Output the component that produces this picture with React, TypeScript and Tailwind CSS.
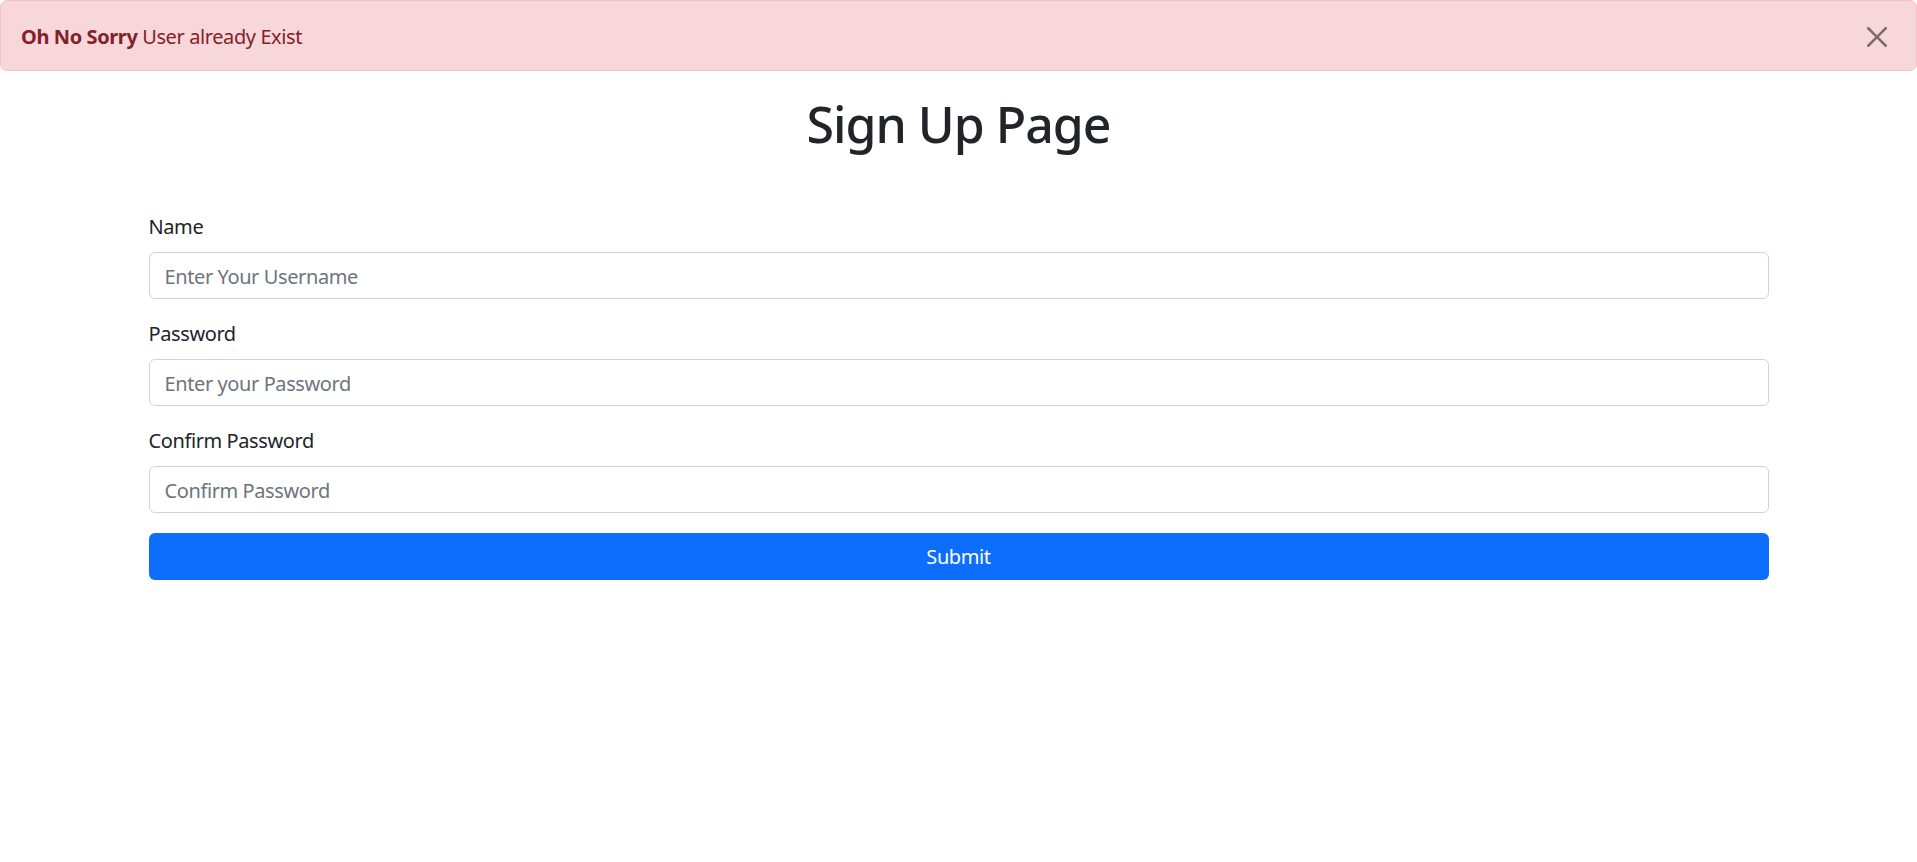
import React from "react";

export default function App() {
  return (
    <div className="min-h-[862px] w-full bg-white text-[#212529] font-['Noto_Sans','Open_Sans',sans-serif] text-[20px] leading-[30px] tracking-[-0.4px]">
      <div className="flex items-center justify-between h-[71px] pl-[20px] pr-[20px] pt-[2px] bg-[#f8d7da] border border-[#f5c2c7] rounded-[7px] text-[#842029]">
        <div>
          <strong className="font-bold">Oh No Sorry</strong> User already Exist
        </div>
        <button className="w-[20px] h-[20px] flex items-center justify-center mr-[9px] opacity-50" aria-label="Close">
          <svg width="20" height="20" viewBox="0 0 16 16" fill="#000">
            <path d="M.293.293a1 1 0 0 1 1.414 0L8 6.586 14.293.293a1 1 0 1 1 1.414 1.414L9.414 8l6.293 6.293a1 1 0 0 1-1.414 1.414L8 9.414l-6.293 6.293a1 1 0 0 1-1.414-1.414L6.586 8 .293 1.707a1 1 0 0 1 0-1.414z" />
          </svg>
        </button>
      </div>

      <h1 className="mt-[23px] text-center text-[50px] leading-[60px] font-medium tracking-[-1px] text-[#212529]">Sign Up Page</h1>

      <div className="mx-auto w-[1620px] mt-[58px]">
        <form className="flex flex-col" onSubmit={(e) => e.preventDefault()}>
          {[
            { label: "Name", ph: "Enter Your Username", type: "text" },
            { label: "Password", ph: "Enter your Password", type: "password" },
            { label: "Confirm Password", ph: "Confirm Password", type: "password" },
          ].map((f) => (
            <div key={f.label} className="mb-[20px]">
              <label className="block mb-[10px] leading-[30px]">{f.label}</label>
              <input
                type={f.type}
                placeholder={f.ph}
                className="block w-full h-[47px] px-[15px] pt-[1px] border border-[#ced4da] rounded-[6px] text-[20px] tracking-[-0.4px] text-[#212529] placeholder:text-[#6c757d] outline-none bg-white"
              />
            </div>
          ))}
          <button
            type="submit"
            className="w-full h-[47px] bg-[#0d6efd] text-white rounded-[6px] text-[20px] leading-[30px] pt-[1px]"
          >
            Submit
          </button>
        </form>
      </div>
    </div>
  );
}
